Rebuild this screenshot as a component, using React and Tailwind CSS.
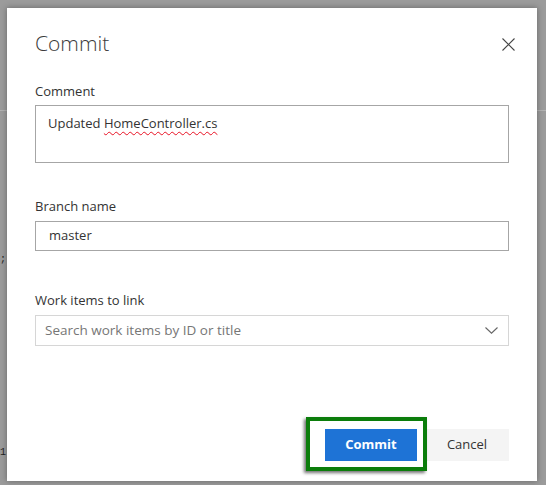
import React from "react";

function CloseIcon() {
  return (
    <svg width="13" height="13" viewBox="0 0 13 13" fill="none">
      <path d="M0.5 0.5L12.5 12.5M12.5 0.5L0.5 12.5" stroke="#444" strokeWidth="1.1" />
    </svg>
  );
}

function Chevron() {
  return (
    <svg width="13" height="7" viewBox="0 0 13 7" fill="none">
      <path d="M0.5 0.5L6.5 6.2L12.5 0.5" stroke="#666" strokeWidth="1.1" />
    </svg>
  );
}

export default function App() {
  return (
    <div
      className="relative w-[546px] h-[485px] overflow-hidden bg-[#9b9b9b] pt-[8px] pl-[7px]"
      style={{ fontFamily: '"Open Sans", "Noto Sans", sans-serif' }}
    >
      {/* page behind the dialog */}
      <div className="absolute left-0 right-0 top-[110px] h-[1px] bg-[#b3b3b3]" />
      <span className="absolute left-0 top-[252px] text-[10px] text-[#222]" style={{ fontFamily: '"Liberation Mono", monospace' }}>;</span>
      <span className="absolute left-0 top-[445px] text-[10px] text-[#222]" style={{ fontFamily: '"Liberation Mono", monospace' }}>1</span>

      {/* dialog */}
      <div className="relative w-[530px] h-[473px] bg-white shadow-[0_0_6px_rgba(0,0,0,0.35)] flex flex-col px-[28px] pt-[21px] pb-[20px] text-[#333]">
        <button className="absolute right-[22px] top-[30px]">
          <CloseIcon />
        </button>

        <h1 className="text-[21px] font-light leading-[28px] text-[#3b3b3b]">Commit</h1>

        <label className="mt-[25px] text-[13px] leading-[18px]">Comment</label>
        <div className="mt-[5px] h-[58px] border border-[#a6a6a6] px-[12px] pt-[7px] text-[13px] leading-[20px]">
          Updated{" "}
          <span className="underline decoration-wavy decoration-[#e81123] decoration-1 underline-offset-[3px]">
            HomeController.cs
          </span>
        </div>

        <label className="mt-[34px] text-[13px] leading-[18px]">Branch name</label>
        <div className="mt-[6px] h-[30px] border border-[#a6a6a6] px-[13px] flex items-center text-[13px]">
          master
        </div>

        <label className="mt-[40px] text-[13px] leading-[18px]">Work items to link</label>
        <div className="mt-[6px] h-[31px] border border-[#d6d6d6] pl-[9px] pr-[10px] flex items-center justify-between text-[13.5px] text-[#767676]">
          <span>Search work items by ID or title</span>
          <Chevron />
        </div>

        <div className="flex-1" />

        <div className="flex justify-end gap-[8px]">
          <div className="relative">
            <span className="absolute left-[-19px] top-[-12px] right-[-10px] bottom-[-10px] border-[4px] border-[#0b7d0b] shadow-[-2px_2px_3px_rgba(0,0,0,0.55)]" />
            <button className="relative w-[92px] h-[32px] bg-[#1e73d6] text-white text-[13px] font-bold">
              Commit
            </button>
          </div>
          <button className="w-[84px] h-[32px] bg-[#f4f4f4] text-[#333] text-[13px]">Cancel</button>
        </div>
      </div>
    </div>
  );
}
